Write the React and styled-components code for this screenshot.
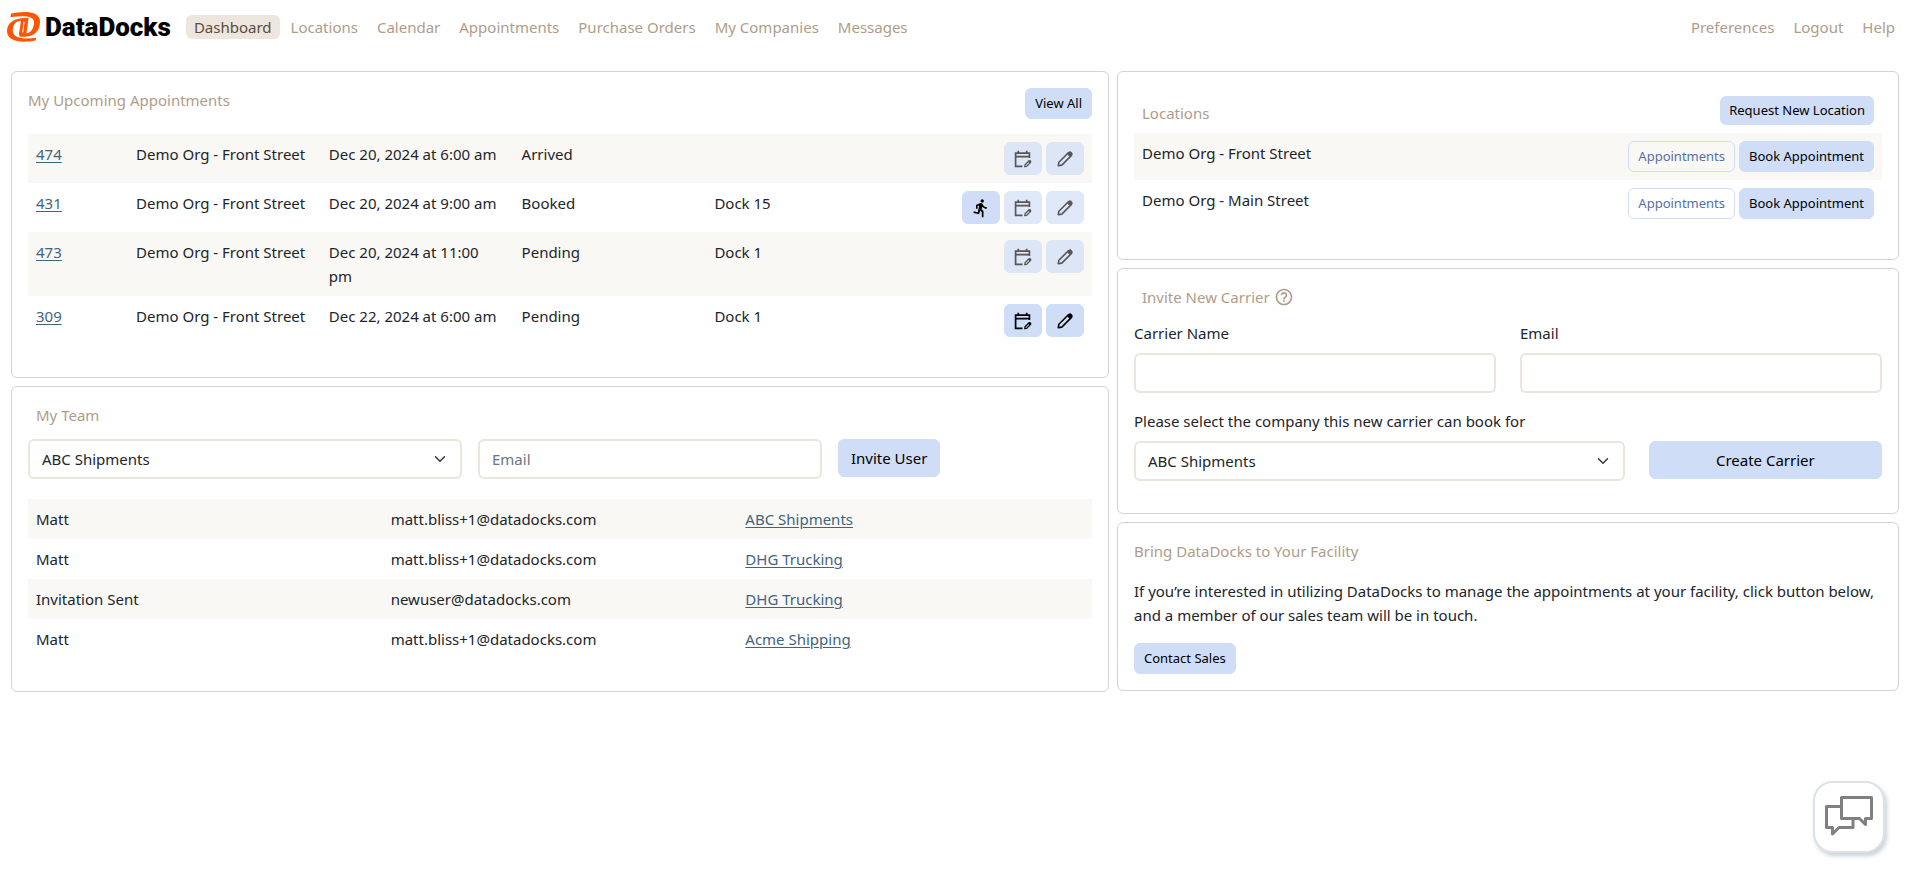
import React from "react";
import styled, { createGlobalStyle } from "styled-components";
import { MdDirectionsRun, MdHelpOutline } from "react-icons/md";

const navLinks = ["Dashboard", "Locations", "Calendar", "Appointments", "Purchase Orders", "My Companies", "Messages"];
const userLinks = ["Preferences", "Logout", "Help"];

const appointments = [
  { id: 474, location: "Demo Org - Front Street", date: "Dec 20, 2024 at 6:00 am", status: "Arrived", dock: "", locked: true },
  {
    id: 431,
    location: "Demo Org - Front Street",
    date: "Dec 20, 2024 at 9:00 am",
    status: "Booked",
    dock: "Dock 15",
    locked: true,
    canArrive: true,
  },
  { id: 473, location: "Demo Org - Front Street", date: "Dec 20, 2024 at 11:00 pm", status: "Pending", dock: "Dock 1", locked: true },
  { id: 309, location: "Demo Org - Front Street", date: "Dec 22, 2024 at 6:00 am", status: "Pending", dock: "Dock 1" },
];

const team = [
  { name: "Matt", email: "matt.bliss+1@datadocks.com", company: "ABC Shipments" },
  { name: "Matt", email: "matt.bliss+1@datadocks.com", company: "DHG Trucking" },
  { name: "Invitation Sent", email: "newuser@datadocks.com", company: "DHG Trucking" },
  { name: "Matt", email: "matt.bliss+1@datadocks.com", company: "Acme Shipping" },
];

const companies = ["ABC Shipments", "DHG Trucking", "Acme Shipping"];
const locations = ["Demo Org - Front Street", "Demo Org - Main Street"];

const CompanyOptions = () => companies.map((company) => <option key={company}>{company}</option>);

const PencilIcon = () => (
  <svg viewBox="0 0 20 20" fill="none" stroke="currentColor" aria-hidden="true">
    <path d="M3.3 16.7L3.9 13.2L13.6 3.5L16.5 6.4L6.8 16.1Z" strokeWidth="1.6" strokeLinejoin="round" />
    <path d="M12.2 4.9L14 3.1C15.6 1.7 18.3 4.4 16.9 6L15.1 7.8Z" fill="currentColor" strokeWidth="0.8" />
  </svg>
);

const CalendarIcon = () => (
  <svg viewBox="0 0 20 20" fill="none" stroke="currentColor" aria-hidden="true">
    <path d="M9.5 17.4H2.6V4.2H16.4V9" strokeWidth="1.7" />
    <path d="M2.6 7.7H16.4M5.3 1.7V4.5M13.7 1.7V4.5" strokeWidth="1.7" />
    <path d="M11.7 17.7L12.1 15.7L16 11.8L17.6 13.4L13.7 17.3Z" strokeWidth="1.3" strokeLinejoin="round" />
    <path d="M15.2 12.6L16.3 11.5C17.2 10.8 18.7 12.2 17.9 13.2L16.8 14.2Z" fill="currentColor" strokeWidth="0.5" />
  </svg>
);

const Navbar = () => (
  <Nav>
    <Brand href="#">
      <svg width="34" height="31" viewBox="0 0 34 31" fill="#ff5400" aria-hidden="true">
        <path d="M4 1.8C15 -1 33 -1.5 33 9.5C33 19 27 24.5 19 24.5H13L13.6 21.2H19.5C24 21.2 27 16 27 10C27 4 18 3 3.5 5.2Z" />
        <path d="M20 6C7 5.500 0 11 0 19C0 29 13 31.5 28.5 28.5L29.3 25.8C17 27.5 5.8 26.5 5.8 18.5C5.8 12.500 9 8.8 14 8.8L12 21.5C12 23.500 12.600 24.500 14 24.500H19L21.600 6Z" />
        <path fill="#fff" d="M16.600 10H17.600L16.200 20.500H15.200Z" />
      </svg>
      <BrandName>DataDocks</BrandName>
    </Brand>
    <NavList>
      {navLinks.map((link) => (
        <li key={link}>
          <NavLink href="#" $active={link === "Dashboard"}>
            {link}
          </NavLink>
        </li>
      ))}
    </NavList>
    <NavList $end>
      {userLinks.map((link) => (
        <li key={link}>
          <NavLink href="#">{link}</NavLink>
        </li>
      ))}
    </NavList>
  </Nav>
);

const Appointments = () => (
  <Card>
    <CardHeader>
      <Title>My Upcoming Appointments</Title>
      <Button $small>View All</Button>
    </CardHeader>
    <Table>
      <colgroup>
        <IdCol />
        <col span="5" />
      </colgroup>
      <tbody>
        {appointments.map((item) => (
          <tr key={item.id}>
            <td>
              <TextLink href="#">{item.id}</TextLink>
            </td>
            <td>{item.location}</td>
            <td>{item.date}</td>
            <td>{item.status}</td>
            <td>{item.dock}</td>
            <td>
              <Actions>
                {item.canArrive && (
                  <IconButton aria-label="Mark as arrived">
                    <MdDirectionsRun />
                  </IconButton>
                )}
                <IconButton aria-label="Reschedule" disabled={item.locked}>
                  <CalendarIcon />
                </IconButton>
                <IconButton aria-label="Edit" disabled={item.locked}>
                  <PencilIcon />
                </IconButton>
              </Actions>
            </td>
          </tr>
        ))}
      </tbody>
    </Table>
  </Card>
);

const Team = () => (
  <Card>
    <Title $inset>My Team</Title>
    <InviteForm>
      <Select aria-label="Company" $span={5}>
        <CompanyOptions />
      </Select>
      <Input type="email" placeholder="Email" aria-label="Email" $span={4} />
      <Button>Invite User</Button>
    </InviteForm>
    <Table>
      <tbody>
        {team.map((member) => (
          <tr key={member.company + member.email}>
            <td>{member.name}</td>
            <td>{member.email}</td>
            <td>
              <TextLink href="#">{member.company}</TextLink>
            </td>
          </tr>
        ))}
      </tbody>
    </Table>
  </Card>
);

const Locations = () => (
  <Card>
    <LocationHeader>
      <Title>Locations</Title>
      <DenseButton $small>Request New Location</DenseButton>
    </LocationHeader>
    <Table>
      <tbody>
        {locations.map((location) => (
          <tr key={location}>
            <td>{location}</td>
            <td>
              <Actions>
                <OutlineButton $small>Appointments</OutlineButton>
                <Button $small>Book Appointment</Button>
              </Actions>
            </td>
          </tr>
        ))}
      </tbody>
    </Table>
  </Card>
);

const InviteCarrier = () => (
  <Card>
    <Title $inset>
      Invite New Carrier <MdHelpOutline />
    </Title>
    <CarrierForm>
      <Field $span={6}>
        <label htmlFor="carrier-name">Carrier Name</label>
        <Input id="carrier-name" type="text" />
      </Field>
      <Field $span={6}>
        <label htmlFor="carrier-email">Email</label>
        <Input id="carrier-email" type="email" />
      </Field>
      <Field $span={8}>
        <label htmlFor="carrier-company">Please select the company this new carrier can book for</label>
        <Select id="carrier-company">
          <CompanyOptions />
        </Select>
      </Field>
      <SubmitCell>
        <Button>Create Carrier</Button>
      </SubmitCell>
    </CarrierForm>
  </Card>
);

const Sales = () => (
  <Card>
    <Title>Bring DataDocks to Your Facility</Title>
    <Paragraph>
      If you’re interested in utilizing DataDocks to manage the appointments at your facility, click button below, and a
      member of our sales team will be in touch.
    </Paragraph>
    <Button $small>Contact Sales</Button>
  </Card>
);

const App = () => (
  <>
    <GlobalStyle />
    <Navbar />
    <Dashboard>
      <Column>
        <Appointments />
        <Team />
      </Column>
      <Column>
        <Locations />
        <InviteCarrier />
        <Sales />
      </Column>
    </Dashboard>
    <ChatButton aria-label="Open chat">
      <svg width="68" height="68" viewBox="2 2 68 68" fill="none" stroke="#808080" strokeWidth="3" strokeLinejoin="round">
        <path d="M27 25.5H13.5V46.5H19.5V53L26 46.5H40V39" />
        <path d="M58.5 37.5H52.5V43.5L46.5 37.5H28.5V16.5H58.5Z" />
      </svg>
    </ChatButton>
  </>
);

const GlobalStyle = createGlobalStyle`
  * {
    box-sizing: border-box;
  }

  body {
    margin: 0;
    background: #fff;
    color: #212529;
    font-family: "Noto Sans", "Open Sans", sans-serif;
    font-size: 15px;
    line-height: 24px;
  }

  button,
  input,
  select {
    font: inherit;
  }
`;

const Nav = styled.nav`
  display: flex;
  align-items: center;
  height: 54px;
  padding: 0 2px 0 7px;
`;

const Brand = styled.a`
  display: flex;
  align-items: center;
  gap: 4px;
  margin-right: 15px;
  color: #000;
  text-decoration: none;
`;

const BrandName = styled.span`
  font-family: Roboto, sans-serif;
  font-size: 26px;
  font-weight: 900;
`;

const NavList = styled.ul`
  display: flex;
  gap: 3px;
  margin: 0 0 0 ${({ $end }) => ($end ? "auto" : "0")};
  padding: 0;
  list-style: none;
`;

const NavLink = styled.a`
  display: block;
  padding: 0 8px;
  border-radius: 6px;
  background: ${({ $active }) => ($active ? "#ede6df" : "transparent")};
  color: ${({ $active }) => ($active ? "#5c4a3d" : "#b09c89")};
  text-decoration: none;
`;

const Dashboard = styled.main`
  display: grid;
  grid-template-columns: 7fr 5fr;
  align-items: start;
  margin-top: 17px;
  padding: 0 2px 0 7px;
`;

const Column = styled.div`
  display: flex;
  flex-direction: column;
  gap: 8px;
  min-width: 0;
  padding: 0 4px;
`;

const Card = styled.section`
  padding: 16px;
  border: 1px solid #d3d3d3;
  border-radius: 6px;
`;

const CardHeader = styled.div`
  display: flex;
  align-items: flex-start;
  justify-content: space-between;
  margin-bottom: 15px;
`;

const LocationHeader = styled.div`
  display: flex;
  align-items: flex-end;
  justify-content: space-between;
  padding: 8px;
`;

const Title = styled.h2`
  display: flex;
  align-items: center;
  gap: 4px;
  margin: 0;
  padding-left: ${({ $inset }) => ($inset ? "8px" : "0")};
  color: #b09c89;
  font-size: 15px;
  font-weight: 400;

  svg {
    width: 20px;
    height: 20px;
  }
`;

const Table = styled.table`
  width: 100%;
  margin-bottom: 16px;
  border-collapse: collapse;
  table-layout: fixed;

  td {
    padding: 8px;
    vertical-align: top;
  }

  tr:nth-child(odd) {
    background: #faf8f5;
  }
`;

const IdCol = styled.col`
  width: 100px;
`;

const TextLink = styled.a`
  color: #3f657b;
  text-underline-offset: 2px;
`;

const Actions = styled.div`
  display: flex;
  justify-content: flex-end;
  gap: 4px;
`;

const Button = styled.button`
  padding: ${({ $small }) => ($small ? "4px 9px" : "6px 12px")};
  border: 1px solid #cfddf7;
  border-radius: 6px;
  background: #cfddf7;
  color: #000;
  font-size: ${({ $small }) => ($small ? "13px" : "15px")};
  line-height: ${({ $small }) => ($small ? "21px" : "24px")};
  white-space: nowrap;
  cursor: pointer;
`;

const DenseButton = styled(Button)`
  padding: 3px 8px;
`;

const OutlineButton = styled(Button)`
  background: transparent;
  color: #5570a8;
`;

const IconButton = styled(Button)`
  display: flex;
  align-items: center;
  justify-content: center;
  width: 38px;
  height: 33px;
  padding: 0;

  &:disabled {
    opacity: 0.65;
    cursor: default;
  }

  svg {
    width: 20px;
    height: 20px;
  }
`;

const Input = styled.input`
  grid-column: span ${({ $span }) => $span || 1};
  width: 100%;
  height: 40px;
  padding: 6px 12px;
  border: 2px solid #ebe5dd;
  border-radius: 6px;
  background: #fff;
  color: #212529;

  &::placeholder {
    color: #6c757d;
  }
`;

const chevron =
  "data:image/svg+xml,%3Csvg xmlns='http://www.w3.org/2000/svg' viewBox='0 0 16 16'%3E%3Cpath fill='none' stroke='%23343a40' stroke-linecap='round' stroke-linejoin='round' stroke-width='2' d='m2 5 6 6 6-6'/%3E%3C/svg%3E";

const Select = styled(Input).attrs({ as: "select" })`
  padding-right: 36px;
  appearance: none;
  background: #fff url("${chevron}") no-repeat right 12px center / 16px 12px;
`;

const InviteForm = styled.form`
  display: grid;
  grid-template-columns: repeat(12, 1fr);
  column-gap: 16px;
  margin: 12px 0 20px;

  button {
    grid-column: span 3;
    justify-self: start;
    align-self: start;
  }
`;

const CarrierForm = styled.form`
  display: grid;
  grid-template-columns: repeat(12, 1fr);
  gap: 16px 24px;
  margin: 12px 0 16px;
`;

const Field = styled.div`
  grid-column: span ${({ $span }) => $span};

  label {
    display: block;
    margin-bottom: 8px;
  }
`;

const SubmitCell = styled.div`
  grid-column: span 4;
  padding-top: 32px;

  button {
    width: 100%;
  }
`;

const Paragraph = styled.p`
  margin: 16px 0;
`;

const ChatButton = styled.button`
  position: fixed;
  right: 20px;
  bottom: 37px;
  width: 72px;
  height: 72px;
  padding: 0;
  border: 2px solid #dce2e8;
  border-radius: 20px;
  background: #fff;
  box-shadow: 2px 3px 4px rgba(120, 140, 155, 0.4);
  cursor: pointer;

  svg {
    display: block;
  }
`;

export default App;
